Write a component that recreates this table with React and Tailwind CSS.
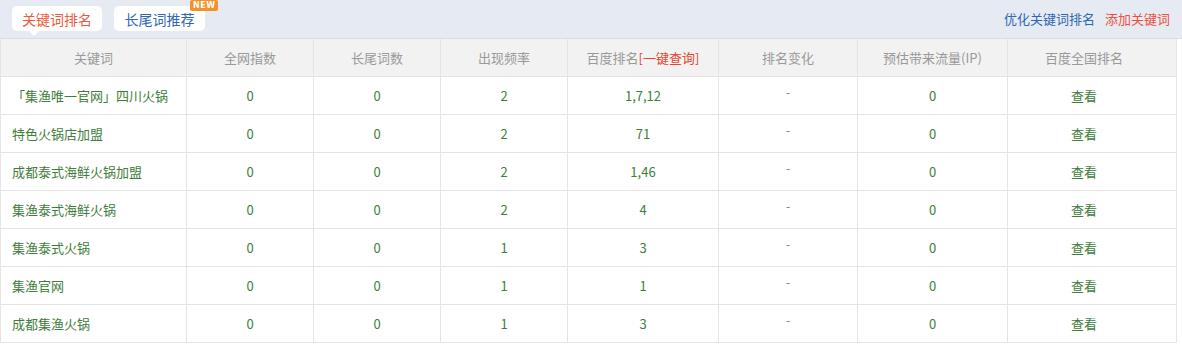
import React from "react";

const cols = [
  { w: "w-[186px]", label: "关键词" },
  { w: "w-[127px]", label: "全网指数" },
  { w: "w-[127px]", label: "长尾词数" },
  { w: "w-[127px]", label: "出现频率" },
  { w: "w-[151px]", label: "百度排名" },
  { w: "w-[139px]", label: "排名变化" },
  { w: "w-[150px]", label: "预估带来流量(IP)" },
  { w: "flex-1 pr-[16px]", label: "百度全国排名" },
];

const rows = [
  ["「集渔唯一官网」四川火锅", "0", "0", "2", "1,7,12"],
  ["特色火锅店加盟", "0", "0", "2", "71"],
  ["成都泰式海鲜火锅加盟", "0", "0", "2", "1,46"],
  ["集渔泰式海鲜火锅", "0", "0", "2", "4"],
  ["集渔泰式火锅", "0", "0", "1", "3"],
  ["集渔官网", "0", "0", "1", "1"],
  ["成都集渔火锅", "0", "0", "1", "3"],
];

export default function App() {
  return (
    <div
      className="w-[1182px] h-[344px] bg-white overflow-hidden text-[13px]"
      style={{ fontFamily: '"Noto Sans CJK SC", "Noto Sans", sans-serif' }}
    >
      <div className="h-[39px] bg-[#e6eaf3] flex items-start pl-[12px] pr-[12px] border-b border-[#d9dde6]">
        <div className="relative mt-[6px] h-[25px] w-[90px] bg-white rounded-[5px] flex items-center justify-center text-[14px] text-[#ec5a3a] leading-none">
          关键词排名
          <span className="absolute left-[17px] top-[25px] w-0 h-0 border-l-[5px] border-r-[5px] border-t-[5px] border-l-transparent border-r-transparent border-t-white" />
        </div>
        <div className="relative ml-[12px] mt-[6px] h-[25px] w-[91px] bg-white rounded-[5px] flex items-center justify-center text-[14px] text-[#2f67b0] leading-none">
          长尾词推荐
          <span className="absolute left-[76px] top-[-6px] h-[11px] px-[3px] bg-[#f4912a] rounded-[2px] text-white text-[8px] font-bold leading-[11px] tracking-[0.5px]" style={{ fontFamily: '"DejaVu Sans", sans-serif' }}>
            NEW
          </span>
        </div>
        <div className="ml-auto mt-[10px] flex items-center gap-[10px] text-[13px] leading-[18px]">
          <span className="text-[#2f67b0]">优化关键词排名</span>
          <span className="text-[#f0503a]">添加关键词</span>
        </div>
      </div>
      <div className="w-[1177px] border-l border-r border-[#e4e4e4]">
        <div className="flex h-[38px] bg-[#f2f2f2] border-b border-[#e4e4e4] text-[#999999]">
          {cols.map((c, i) => (
            <div
              key={i}
              className={`${c.w} shrink-0 flex items-center justify-center ${i < cols.length - 1 ? "border-r border-[#e4e4e4]" : ""}`}
            >
              {c.label}
              {i === 4 && <span className="text-[#e8452c]">[一键查询]</span>}
            </div>
          ))}
        </div>
        {rows.map((r, ri) => (
          <div key={ri} className="flex h-[38px] border-b border-[#e4e4e4] text-[#3e7d3a]">
            {cols.map((c, i) => {
              let content;
              if (i < 5) content = r[i];
              else if (i === 5) content = <span className="text-[#777] text-[12px] relative top-[-4px]">-</span>;
              else if (i === 6) content = "0";
              else content = "查看";
              return (
                <div
                  key={i}
                  className={`${c.w} shrink-0 flex items-center ${i === 0 ? "justify-start pl-[11px]" : "justify-center"} ${i < cols.length - 1 ? "border-r border-[#e4e4e4]" : ""}`}
                >
                  {content}
                </div>
              );
            })}
          </div>
        ))}
      </div>
    </div>
  );
}
